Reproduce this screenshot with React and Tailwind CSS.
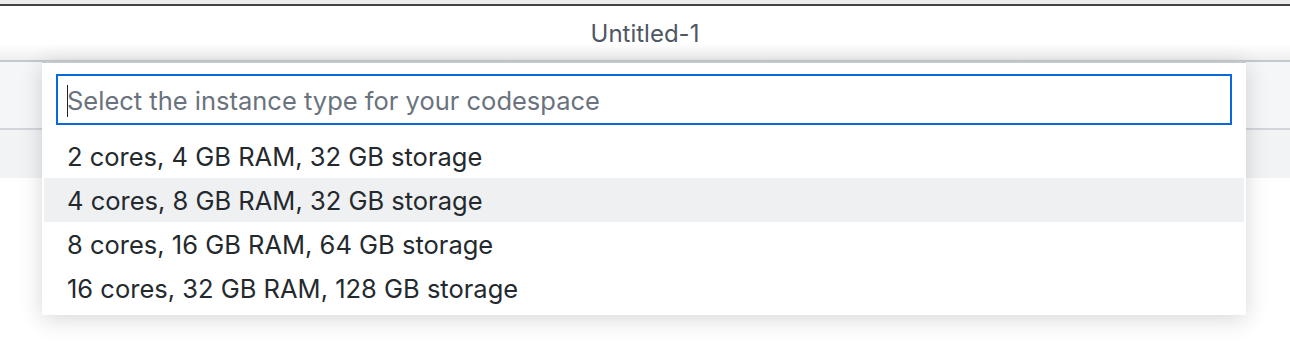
import React from 'react';

const options = [
  '2 cores, 4 GB RAM, 32 GB storage',
  '4 cores, 8 GB RAM, 32 GB storage',
  '8 cores, 16 GB RAM, 64 GB storage',
  '16 cores, 32 GB RAM, 128 GB storage',
];

const font = { fontFamily: 'Inter, "Noto Sans", sans-serif' };

export default function App() {
  return (
    <div className="relative w-[1290px] h-[364px] bg-white overflow-hidden" style={font}>
      {/* window chrome */}
      <div className="h-[4px] bg-[#ececec]" />
      <div className="h-[2px] bg-[#444444]" />
      <div className="h-[54px] flex items-center justify-center pt-[2px] bg-gradient-to-b from-white from-70% to-[#efefef]">
        <span className="text-[24px] text-[#4f5763]">Untitled-1</span>
      </div>
      <div className="h-[2px] bg-[#c5c9ce]" />
      {/* editor area behind */}
      <div className="h-[68px] bg-[#f5f6f8] border-b-2 border-[#d2d6db]" />
      <div className="h-[48px] bg-[#f2f3f5]" />

      {/* quick pick */}
      <div className="absolute left-[42px] top-[61px] w-[1204px] bg-white border-t-2 border-[#c5c9ce] shadow-[0_4px_22px_rgba(0,0,0,0.16)] pb-[5px]">
        <div className="px-[14px] pt-[11px] pb-[9px]">
          <div className="h-[51px] border-2 border-[#0a69d8] flex items-center pl-[9px] pt-[2px]">
            <span className="w-px h-[32px] bg-[#222] -mr-px" />
            <span className="text-[25.5px] leading-none text-[#6a737d]">Select the instance type for your codespace</span>
          </div>
        </div>
        <div className="px-[2px]">
          {options.map((o, i) => (
            <div
              key={o}
              className={`h-[44px] flex items-center pl-[23px] pt-[2px] text-[25.5px] text-[#24292e] ${i === 1 ? 'bg-[#eff0f2]' : ''}`}
            >
              {o}
            </div>
          ))}
        </div>
      </div>
    </div>
  );
}
